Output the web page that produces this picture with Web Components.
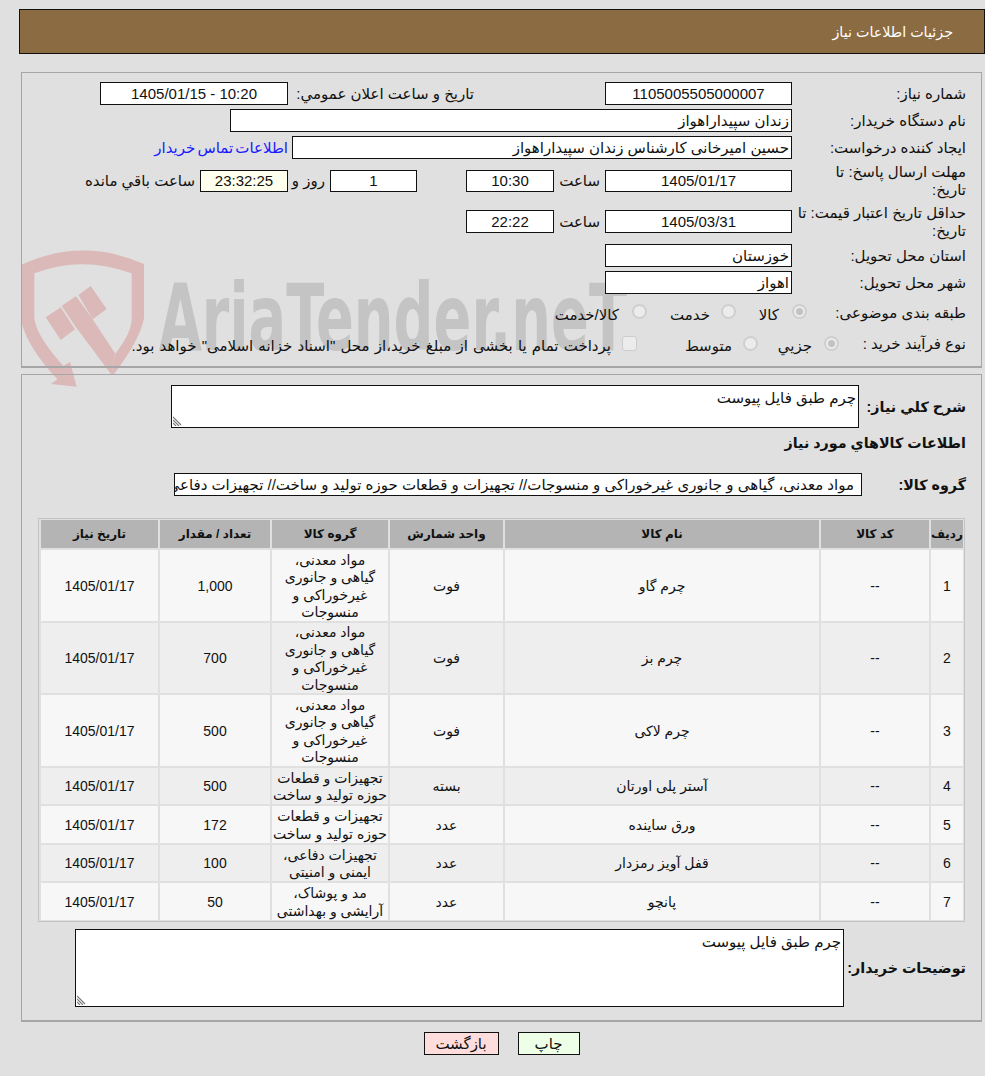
<!DOCTYPE html>
<html lang="fa" dir="rtl"><head><meta charset="utf-8"><title>جزئیات اطلاعات نیاز</title>
<style>
html,body{margin:0;padding:0;background:#e0e0e0}
body{width:985px;height:1076px;overflow:hidden;position:relative;font:15px/18px "Liberation Sans","DejaVu Sans",sans-serif;color:#111}
.opt{padding-top:4px;white-space:nowrap;flex:none}
.sp{flex:none;white-space:nowrap}
.b{font-weight:bold;font-size:14.3px}
.n{font-weight:normal;font-size:15px}
</style></head><body>
<script>
function def(name,css,html){
  customElements.define(name,class extends HTMLElement{
    constructor(){super();const s=this.attachShadow({mode:'open'});s.innerHTML='<style>'+css+'</style>'+html;}
  });
}
def('page-header',':host{display:flex;align-items:center;box-sizing:border-box;height:45px;margin:9px 0 0 0;width:966px;background:#8b6c42;border:1px solid #111;color:#fff;padding-right:31px;font-size:14.3px}','<slot></slot>');
def('page-panel',':host{display:block;box-sizing:border-box;width:961px;margin-right:3px;border:1px solid #a6a6a6;border-width:1px 1px 2px 1px;position:relative}','<slot></slot>');
def('form-row',`:host{display:flex;align-items:center;height:var(--h,27px);padding-right:15px}
.l{width:var(--lw,174px);flex:none}.c{display:flex;align-items:center;flex:1}`,'<div class="l"><slot name="label"></slot></div><div class="c"><slot></slot></div>');
def('field-box',`:host{display:block;box-sizing:border-box;height:var(--bh,23px);border:1px solid #111;background:#fff;line-height:calc(var(--bh,23px) - 2px);padding:0 2px;overflow:hidden;white-space:nowrap;flex:none}
:host([center]){text-align:center}:host([warm]){background:#ffffee}`,'<slot></slot>');
def('radio-mark',`:host{display:block;flex:none;width:15px;height:15px;border:2px solid #cfcfcf;border-radius:50%;background:#ececec;box-sizing:border-box;position:relative;margin-bottom:2px}
:host([on])::after{content:"";position:absolute;inset:2px;border-radius:50%;background:#c2c2c2}
:host([square]){border-radius:3px;border-width:1px;border-color:#cdcdcd}`,'');
def('big-area',`:host{display:block;box-sizing:border-box;border:1px solid #111;background:#fff;position:relative;padding:3px 2px;flex:none;line-height:18px}
svg{position:absolute;left:1px;bottom:1px}`,'<slot></slot><svg width="10" height="10" viewBox="0 0 10 10"><path d="M0 1L8 9M0 4L6 10M0 7L3 10" stroke="#777" stroke-width="1.1"/></svg>');
def('items-table',`:host{display:block;box-sizing:border-box;width:927px;margin:0 16px 0 0;border:1px solid #c4c4c4;padding:1px 1px 1px 2px}
.g{display:grid;gap:2px}`,'<div class="g"><slot></slot></div>');
def('item-row',`:host{display:grid;grid-template-columns:32px 108px 314px 113px 116px 110px 117px;gap:2px;height:var(--h,70px);font-size:var(--s,14px)}`,'<slot></slot>');
def('item-cell',`:host{display:flex;align-items:center;justify-content:center;text-align:center;background:var(--b,#f7f7f7);line-height:17.5px;overflow:hidden;box-sizing:border-box;padding-top:2px}`,'<span><slot></slot></span>');
def('act-button',`:host{display:inline-flex;align-items:center;justify-content:center;box-sizing:border-box;height:23px;border:1px solid #111;background:var(--b)}`,'<slot></slot>');
def('aria-mark',`:host{position:absolute;left:0;top:240px;width:630px;height:160px;pointer-events:none}
svg{display:block}`,`<svg width="630" height="160" viewBox="0 0 1890 480">
<g fill="#dcb9b9">
<path d="M63 75Q245 -10 432 72L432 235Q420 300 340 405L335 403L345 342Q395 280 395 235L395 100Q245 45 103 100L103 235Q110 290 190 378L210 365L230 440L153 432L172 418Q80 320 63 240Z"/>
<path d="M137 232L182 202L225 268L182 300Z"/>
<path d="M185 198L228 168L278 238L345 340L335 405L228 262Z"/>
<path d="M235 165L272 138L320 207L278 238Z"/>
</g>
<text x="476" y="330" style="direction:ltr;unicode-bidi:embed" text-anchor="start" font-family="'DejaVu Sans Condensed','DejaVu Sans'" font-weight="bold" font-size="276" fill="#c4c4c4" textLength="1405" lengthAdjust="spacingAndGlyphs">AriaTender.neT</text>
</svg>`);
</script>
<page-header>جزئیات اطلاعات نیاز</page-header>
<aria-mark></aria-mark>
<page-panel style="margin-top:18px;height:296px;padding-top:7px">
  <form-row><span slot="label">شماره نیاز:</span><field-box center style="width:187px">1105005505000007</field-box><span class="sp" style="margin-right:131px;width:186px">تاریخ و ساعت اعلان عمومي:</span><field-box center style="width:188px">10:20 - 1405/01/15</field-box></form-row>
  <form-row><span slot="label">نام دستگاه خریدار:</span><field-box style="width:562px">زندان سپیداراهواز</field-box></form-row>
  <form-row><span slot="label">ایجاد کننده درخواست:</span><field-box style="width:500px">حسین امیرخانی کارشناس زندان سپیداراهواز</field-box><a class="sp" style="color:#1a1aff;margin-right:4px;word-spacing:-2px">اطلاعات تماس خریدار</a></form-row>
  <form-row style="--h:40px;--bh:22px"><span slot="label">مهلت ارسال پاسخ: تا<br>تاریخ:</span><field-box center style="width:187px">1405/01/17</field-box><span class="sp" style="width:46px;margin-right:5px">ساعت</span><field-box center style="width:88px">10:30</field-box><span class="sp" style="width:49px"></span><field-box center style="width:87px">1</field-box><span class="sp" style="margin-right:5px;width:37px">روز و</span><field-box center warm style="width:88px">23:32:25</field-box><span class="sp" style="margin-right:5px">ساعت باقي مانده</span></form-row>
  <form-row style="--h:41px"><span slot="label">حداقل تاریخ اعتبار قیمت: تا<br>تاریخ:</span><field-box center style="width:187px">1405/03/31</field-box><span class="sp" style="width:46px;margin-right:5px">ساعت</span><field-box center style="width:88px">22:22</field-box></form-row>
  <form-row><span slot="label">استان محل تحویل:</span><field-box style="width:187px">خوزستان</field-box></form-row>
  <form-row><span slot="label">شهر محل تحویل:</span><field-box style="width:187px">اهواز</field-box></form-row>
  <form-row style="--h:33px;--lw:159px"><span slot="label">طبقه بندی موضوعی:</span><radio-mark on></radio-mark><span class="opt" style="margin-right:13px;width:43px">کالا</span><radio-mark></radio-mark><span class="opt" style="margin-right:11px;width:63px">خدمت</span><radio-mark></radio-mark><span class="opt" style="margin-right:13px">کالا/خدمت</span></form-row>
  <form-row style="--h:30px;--lw:127px"><span slot="label">نوع فرآیند خرید :</span><radio-mark on></radio-mark><span class="opt" style="margin-right:12px;width:54px">جزيي</span><radio-mark></radio-mark><span class="opt" style="margin-right:11px;width:95px">متوسط</span><radio-mark square></radio-mark><span class="opt" style="margin-right:11px;word-spacing:1px">پرداخت تمام یا بخشی از مبلغ خرید،از محل "اسناد خزانه اسلامی" خواهد بود.</span></form-row>
</page-panel>
<page-panel style="margin-top:6px;height:648px;padding-top:10px">
  <div class="b" style="display:flex;align-items:center;padding-right:15px"><span class="sp" style="width:107px">شرح کلي نیاز:</span><big-area class="n" style="width:688px;height:43px">چرم طبق فایل پیوست</big-area></div>
  <div class="b" style="padding-right:15px;margin-top:6px">اطلاعات کالاهاي مورد نیاز</div>
  <div class="b" style="display:flex;align-items:center;padding-right:15px;margin-top:21px"><span class="sp" style="width:104px">گروه کالا:</span><field-box class="n" style="width:688px;padding:0 7px">مواد معدنی، گیاهی و جانوری غیرخوراکی و منسوجات// تجهیزات و قطعات حوزه تولید و ساخت// تجهیزات دفاعی، ایمنی و امنیتی// مد و پوشاک، آرایشی و بهداشتی</field-box></div>
  <items-table style="margin-top:22px">
    <item-row style="--h:28px;--b:#b4b4b4;--s:12px;font-weight:bold"><item-cell>ردیف</item-cell><item-cell>کد کالا</item-cell><item-cell>نام کالا</item-cell><item-cell>واحد شمارش</item-cell><item-cell>گروه کالا</item-cell><item-cell>تعداد / مقدار</item-cell><item-cell>تاریخ نیاز</item-cell></item-row>
    <item-row style="--h:71px"><item-cell>1</item-cell><item-cell>--</item-cell><item-cell>چرم گاو</item-cell><item-cell>فوت</item-cell><item-cell>مواد معدنی،<br>گیاهی و جانوری<br>غیرخوراکی و<br>منسوجات</item-cell><item-cell>1,000</item-cell><item-cell>1405/01/17</item-cell></item-row>
    <item-row style="--h:70px;--b:#eeeeee"><item-cell>2</item-cell><item-cell>--</item-cell><item-cell>چرم بز</item-cell><item-cell>فوت</item-cell><item-cell>مواد معدنی،<br>گیاهی و جانوری<br>غیرخوراکی و<br>منسوجات</item-cell><item-cell>700</item-cell><item-cell>1405/01/17</item-cell></item-row>
    <item-row style="--h:71px"><item-cell>3</item-cell><item-cell>--</item-cell><item-cell>چرم لاکی</item-cell><item-cell>فوت</item-cell><item-cell>مواد معدنی،<br>گیاهی و جانوری<br>غیرخوراکی و<br>منسوجات</item-cell><item-cell>500</item-cell><item-cell>1405/01/17</item-cell></item-row>
    <item-row style="--h:36px;--b:#eeeeee"><item-cell>4</item-cell><item-cell>--</item-cell><item-cell>آستر پلی اورتان</item-cell><item-cell>بسته</item-cell><item-cell>تجهیزات و قطعات حوزه تولید و ساخت</item-cell><item-cell>500</item-cell><item-cell>1405/01/17</item-cell></item-row>
    <item-row style="--h:37px"><item-cell>5</item-cell><item-cell>--</item-cell><item-cell>ورق ساینده</item-cell><item-cell>عدد</item-cell><item-cell>تجهیزات و قطعات حوزه تولید و ساخت</item-cell><item-cell>172</item-cell><item-cell>1405/01/17</item-cell></item-row>
    <item-row style="--h:36px;--b:#eeeeee"><item-cell>6</item-cell><item-cell>--</item-cell><item-cell>قفل آویز رمزدار</item-cell><item-cell>عدد</item-cell><item-cell>تجهیزات دفاعی، ایمنی و امنیتی</item-cell><item-cell>100</item-cell><item-cell>1405/01/17</item-cell></item-row>
    <item-row style="--h:37px"><item-cell>7</item-cell><item-cell>--</item-cell><item-cell>پانچو</item-cell><item-cell>عدد</item-cell><item-cell>مد و پوشاک، آرایشی و بهداشتی</item-cell><item-cell>50</item-cell><item-cell>1405/01/17</item-cell></item-row>
  </items-table>
  <div class="b" style="display:flex;align-items:center;padding-right:15px;margin-top:7px"><span class="sp" style="width:122px">توضیحات خریدار:</span><big-area class="n" style="width:769px;height:78px">چرم طبق فایل پیوست</big-area></div>
</page-panel>
<div style="display:flex;justify-content:center;gap:19px;margin-top:10px;padding-left:18px">
  <act-button style="--b:#eeffe8;width:62px">چاپ</act-button>
  <act-button style="--b:#ffdddd;width:75px">بازگشت</act-button>
</div>
</body></html>
